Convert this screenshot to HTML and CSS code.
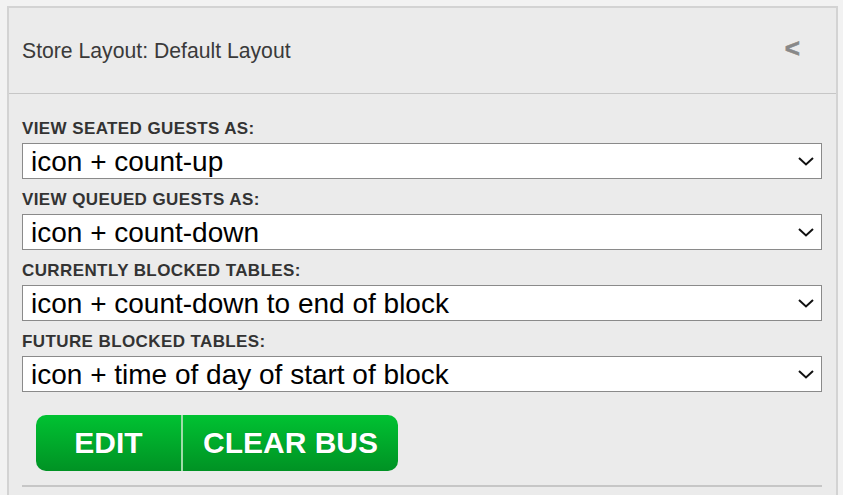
FILE: index.html
```html
<!DOCTYPE html>
<html>
<head>
<meta charset="utf-8">
<link rel="stylesheet" href="styles.css">
</head>
<body>
<div class="panel">
  <div class="header">
    <span class="title">Store Layout: Default Layout</span>
    <span class="collapse">&lt;</span>
  </div>
  <div class="content">
    <label class="field-label">VIEW SEATED GUESTS AS:</label>
    <div class="select-wrap">
      <select class="select"><option>icon + count-up</option></select>
      <svg class="chev" width="16" height="9" viewBox="0 0 16 9"><path d="M1 1 L8 7.5 L15 1" fill="none" stroke="#111" stroke-width="2"/></svg>
    </div>
    <label class="field-label">VIEW QUEUED GUESTS AS:</label>
    <div class="select-wrap">
      <select class="select"><option>icon + count-down</option></select>
      <svg class="chev" width="16" height="9" viewBox="0 0 16 9"><path d="M1 1 L8 7.5 L15 1" fill="none" stroke="#111" stroke-width="2"/></svg>
    </div>
    <label class="field-label">CURRENTLY BLOCKED TABLES:</label>
    <div class="select-wrap">
      <select class="select"><option>icon + count-down to end of block</option></select>
      <svg class="chev" width="16" height="9" viewBox="0 0 16 9"><path d="M1 1 L8 7.5 L15 1" fill="none" stroke="#111" stroke-width="2"/></svg>
    </div>
    <label class="field-label">FUTURE BLOCKED TABLES:</label>
    <div class="select-wrap">
      <select class="select"><option>icon + time of day of start of block</option></select>
      <svg class="chev" width="16" height="9" viewBox="0 0 16 9"><path d="M1 1 L8 7.5 L15 1" fill="none" stroke="#111" stroke-width="2"/></svg>
    </div>
    <div class="buttons">
      <button class="btn btn-edit">EDIT</button><button class="btn btn-clear">CLEAR BUS</button>
    </div>
    <div class="rule"></div>
  </div>
</div>
</body>
</html>
```
FILE: styles.css
```css
html, body {
  margin: 0;
  padding: 0;
  background: #f2f2f2;
  font-family: "Liberation Sans", Arial, sans-serif;
  overflow: hidden;
}
.panel {
  margin: 6px 0 0 7px;
  width: 827px;
  height: 600px;
  background: #ebebeb;
  border: 2px solid #d3d3d3;
}
.header {
  height: 85px;
  border-bottom: 1px solid #c6c6c6;
  display: flex;
  align-items: center;
  justify-content: space-between;
  padding: 0 36px 0 13px;
}
.title {
  font-size: 21.2px;
  color: #3a3a3a;
}
.collapse {
  font-size: 26px;
  font-weight: bold;
  color: #888;
  margin-top: -4px;
  -webkit-text-stroke: 0.6px #888;
}
.content {
  padding: 25px 14px 0 13px;
  display: flex;
  flex-direction: column;
}
.field-label {
  display: block;
  font-size: 17px;
  font-weight: bold;
  letter-spacing: 0.4px;
  line-height: 20px;
  color: #333;
  margin-bottom: 4px;
}
.select-wrap {
  position: relative;
  margin-bottom: 11px;
}
.select {
  appearance: none;
  -webkit-appearance: none;
  width: 800px;
  height: 36px;
  margin: 0;
  padding: 0 0 0 8px;
  border: 1px solid #8a8a8a;
  border-radius: 0;
  background: #fff;
  font-family: "Liberation Sans", Arial, sans-serif;
  font-size: 28px;
  color: #000;
  display: block;
}
.chev {
  position: absolute;
  right: 8px;
  top: 14px;
  pointer-events: none;
}
.buttons {
  display: flex;
  margin: 12px 0 0 14px;
}
.btn {
  height: 56px;
  border: none;
  margin: 0;
  padding: 0;
  color: #fff;
  font-family: "Liberation Sans", Arial, sans-serif;
  font-weight: bold;
  font-size: 30px;
  background: linear-gradient(#00c232, #009224);
  text-shadow: 0 0 1px rgba(0,0,0,0.3);
}
.btn-edit {
  width: 147px;
  border-radius: 10px 0 0 10px;
  border-right: 2px solid #9fdca9;
}
.btn-clear {
  width: 215px;
  border-radius: 0 10px 10px 0;
}
.rule {
  margin-top: 14px;
  height: 2px;
  background: #c6c6c6;
  width: 800px;
}
```
